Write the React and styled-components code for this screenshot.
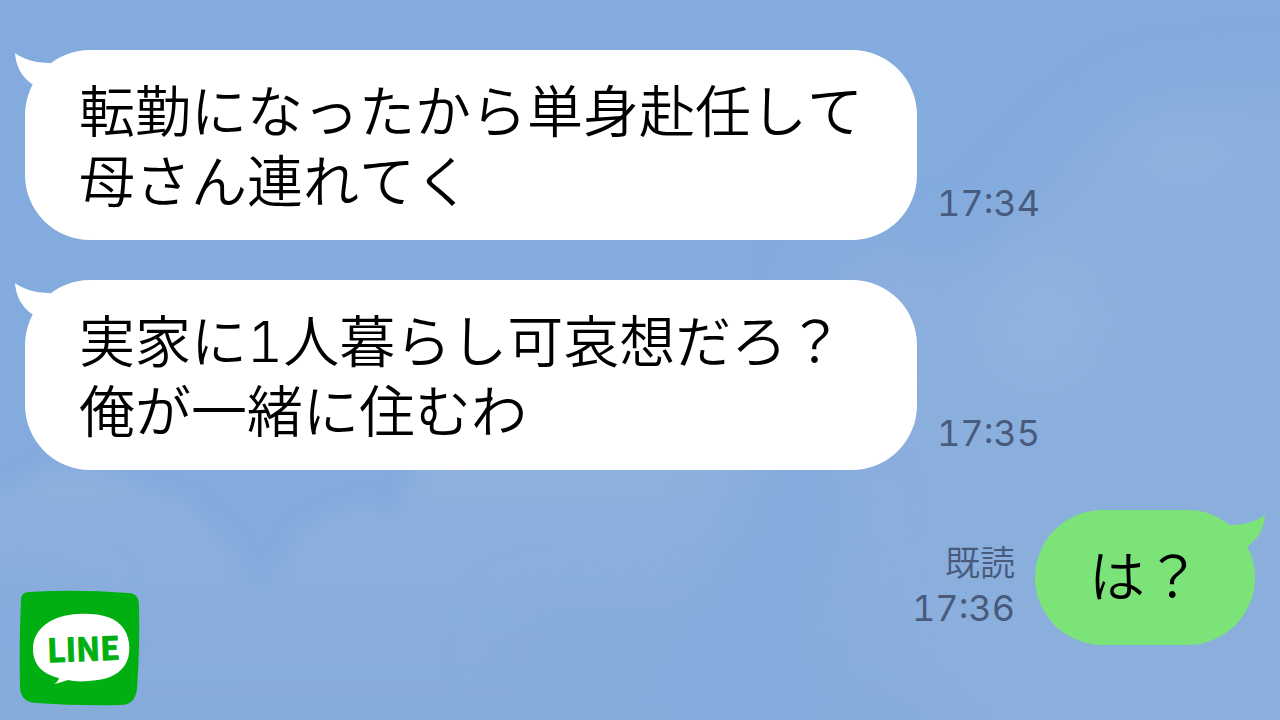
import styled, { createGlobalStyle } from "styled-components";

const GlobalStyle = createGlobalStyle`
    * {
        box-sizing: border-box;
    }

    body {
        margin: 0;
        background-color: #83abdd;
        font-family: Inter, "Noto Sans CJK JP", sans-serif;
        font-kerning: none;
    }
`

const Page = styled.div`
    position: relative;
    min-height: 100vh;
    overflow: hidden;
`

const Sky = styled.svg`
    position: absolute;
    inset: 0;
    width: 100%;
    height: 100%;
`

const Chat = styled.main`
    position: relative;
    display: flex;
    flex-direction: column;
    gap: 40px;
    padding: 50px 25px;
`

const Incoming = styled.section`
    display: grid;
    grid-template-columns: max-content auto;
    gap: 40px 20px;
`

const Outgoing = styled.section`
    display: flex;
    justify-content: flex-end;
    gap: 20px;
`

const Bubble = styled.div`
    position: relative;
    padding: ${({ $mine }) => ($mine ? "32px 54px 33px" : "27px 54px 23px")};
    border-radius: ${({ $mine }) => ($mine ? "68px" : "65px")};
    background-color: ${({ $mine }) => ($mine ? "#7be377" : "#fff")};
    color: ${({ $mine }) => ($mine ? "#7be377" : "#fff")};
`

const Message = styled.p`
    margin: 0;
    color: #000;
    font-size: 56px;
    font-weight: 350;
    font-variant-numeric: tabular-nums;
    line-height: 70px;
    white-space: pre-line;
`

const Tail = styled.svg`
    position: absolute;
    top: ${({ $mine }) => ($mine ? "2px" : "0")};
    ${({ $mine }) => ($mine ? "right: -10px; transform: scaleX(-1);" : "left: -10px;")}
    width: 50px;
    height: 44px;
    fill: currentColor;
`

const Meta = styled.div`
    display: flex;
    flex-direction: column;
    justify-content: flex-end;
    padding-bottom: 14px;
    color: #485b7c;
    font-size: 36px;
    font-variant-numeric: tabular-nums;
    line-height: 45px;
`

const Read = styled.span`
    font-size: 35px;
    font-weight: 350;
    text-align: right;
`

const Logo = styled.svg`
    position: absolute;
    left: 18px;
    bottom: 12px;
    width: 124px;
    height: 120px;
`

const LogoText = styled.text`
    fill: #00b012;
    stroke: #00b012;
    stroke-width: 1;
    stroke-linejoin: round;
    font-family: "Noto Sans CJK JP", sans-serif;
    font-size: 32px;
    font-weight: 700;
`

const messages = [
    { text: "転勤になったから単身赴任して\n母さん連れてく", time: "17:34" },
    { text: "実家に1人暮らし可哀想だろ？\n俺が一緒に住むわ", time: "17:35" },
]

function Clouds(){
    return(
        <Sky viewBox="0 0 1280 720" preserveAspectRatio="none" aria-hidden="true">
            <defs>
                <filter id="soft" x="-10%" y="-10%" width="120%" height="120%">
                    <feGaussianBlur stdDeviation="8" />
                </filter>
                <filter id="wide" filterUnits="userSpaceOnUse" x="-200" y="-200" width="1700" height="1200">
                    <feGaussianBlur stdDeviation="30" />
                </filter>
                <linearGradient id="low" x1="0" y1="0" x2="0" y2="1">
                    <stop offset="0" stopColor="#8eb1de" />
                    <stop offset="0.4" stopColor="#8bafdd" />
                    <stop offset="1" stopColor="#85abdb" />
                </linearGradient>
            </defs>
            <rect width="1280" height="720" fill="#83abdd" />
            <path fill="url(#low)" filter="url(#soft)" d="M-30 500L15 487L45 468L120 472L145 490L185 500L210 525L235 548L256 595L285 555L300 530L335 512L370 502L382 515L398 510L415 460L520 430L640 440L740 450L900 470L960 740L-30 740Z" />
            <g filter="url(#wide)">
                <path fill="#8bafdd" d="M820 265L880 245L985 265L1000 235L1050 180L1100 135L1150 100L1400 80L1400 800L1040 800L900 680L870 600L900 500L860 420Z" />
                <ellipse cx="1180" cy="150" rx="60" ry="25" fill="#91b4e0" />
                <ellipse cx="1040" cy="320" rx="60" ry="70" fill="#90b3df" />
                <path fill="#83abdc" d="M760 440L850 440L850 540L800 620L840 760L680 760L640 680L700 600L740 520Z" />
                <ellipse cx="590" cy="650" rx="80" ry="40" fill="#85abdb" />
                <ellipse cx="20" cy="620" rx="60" ry="40" fill="#83abdd" />
            </g>
        </Sky>
    )
}

function Balloon({ text, mine }){
    return(
        <Bubble $mine={mine}>
            <Tail $mine={mine} viewBox="0 0 50 44" aria-hidden="true">
                <path d="M0 3C8 9 20 13 35 13L50 20L40 44L17 34C7 27 1 17 0 3Z" />
            </Tail>
            <Message>{text}</Message>
        </Bubble>
    )
}

function LineLogo(){
    return(
        <Logo viewBox="0 0 124 120" role="img" aria-label="LINE">
            <path fill="#00b012" d="M3 12Q3 4 11 4Q58 1 110 5Q121 5 121 17Q122 60 119 101Q117 117 103 117Q60 118 18 115Q3 114 2 100Q1 55 3 12Z" />
            <path fill="#fff" d="M60 26C82 25 98 29 106 41C113 52 113 68 107 77C99 89 86 92 70 93C62 94 54 93 50 92C46 93 42 95 36 96C39 94 40 93 41 90C24 86 15 76 15 61C15 40 35 27 60 26Z" />
            <LogoText x="29" y="73" transform="rotate(-2 62 60)">LINE</LogoText>
        </Logo>
    )
}

export default function App(){
    return(
        <Page>
            <GlobalStyle />
            <Clouds />
            <Chat>
                <Incoming>
                    {messages.map(({ text, time }) => [
                        <Balloon key={text} text={text} />,
                        <Meta key={time}>
                            <time>{time}</time>
                        </Meta>,
                    ])}
                </Incoming>
                <Outgoing>
                    <Meta>
                        <Read>既読</Read>
                        <time>17:36</time>
                    </Meta>
                    <Balloon mine text="は？" />
                </Outgoing>
            </Chat>
            <LineLogo />
        </Page>
    )
}
